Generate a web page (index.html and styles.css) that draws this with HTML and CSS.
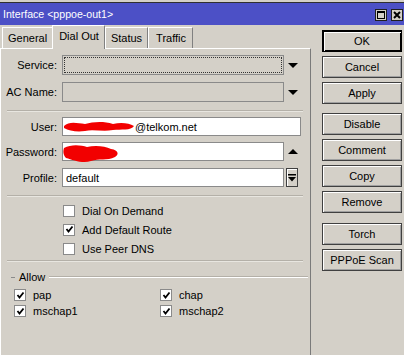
FILE: index.html
```html
<!DOCTYPE html>
<html>
<head>
<meta charset="utf-8">
<link rel="stylesheet" href="styles.css">
</head>
<body>
<div class="strip"></div>
<div class="titlebar">
  <span class="title">Interface &lt;pppoe-out1&gt;</span>
  <div class="winbtns">
    <span class="wbtn"><span class="maxbox"></span></span>
    <span class="wbtn close">
      <svg width="10" height="10" viewBox="0 0 10 10"><path d="M2 2 L8 8 M8 2 L2 8" stroke="#000" stroke-width="2"/></svg>
    </span>
  </div>
</div>
<div class="main">
  <div class="left">
    <div class="tabs">
      <div class="tab">General</div>
      <div class="tab active">Dial Out</div>
      <div class="tab">Status</div>
      <div class="tab">Traffic</div>
    </div>
    <div class="panel">
      <div class="row row-tall">
        <span class="lbl">Service:</span>
        <div class="field disabled"><span class="focusring"></span></div>
        <span class="tri-down"></span>
      </div>
      <div class="row row-tall gap7">
        <span class="lbl">AC Name:</span>
        <div class="field disabled"></div>
        <span class="tri-down"></span>
      </div>
      <div class="sep sep-a"></div>
      <div class="row">
        <span class="lbl">User:</span>
        <div class="field wide">
          <svg class="redact" width="72" height="14" viewBox="0 0 72 14"><path d="M1 6 C6 1 14 3 22 4 C30 2 40 1 50 4 C58 2 66 3 71 6 C68 11 58 9 50 10 C40 12 30 9 22 11 C14 12 6 11 1 8 Z" fill="#f20000"/></svg><span class="val">@telkom.net</span>
        </div>
      </div>
      <div class="row gap6">
        <span class="lbl">Password:</span>
        <div class="field">
          <svg class="redact pw" width="56" height="20" viewBox="0 0 56 20"><path d="M1 4 C8 0 18 1 24 3 C32 1 42 2 48 5 C56 6 56 11 52 13 C44 17 36 14 28 17 C20 20 10 16 3 14 C0 11 0 7 1 4 Z" fill="#f20000"/></svg>
        </div>
        <span class="tri-up"></span>
      </div>
      <div class="row gap7">
        <span class="lbl">Profile:</span>
        <div class="field"><span class="val">default</span></div>
        <span class="ddbtn">
          <svg width="8" height="8" viewBox="0 0 8 8"><rect x="0" y="0" width="8" height="1.5" fill="#000"/><path d="M0 3 L8 3 L4 7.5 Z" fill="#000"/></svg>
        </span>
      </div>
      <div class="sep sep-b"></div>
      <div class="checks">
        <div class="chk"><span class="box"></span><span>Dial On Demand</span></div>
        <div class="chk"><span class="box"><svg width="9" height="9" viewBox="0 0 9 9"><path d="M1.5 4 L3.5 6.5 L7.5 1.5" stroke="#000" stroke-width="1.8" fill="none"/></svg></span><span>Add Default Route</span></div>
        <div class="chk"><span class="box"></span><span>Use Peer DNS</span></div>
      </div>
      <div class="sep sep-c"></div>
      <div class="legend"><span class="dash"></span><span class="legtext">Allow</span><span class="legline"></span></div>
      <div class="allow">
        <div class="chk"><span class="box"><svg width="9" height="9" viewBox="0 0 9 9"><path d="M1.5 4 L3.5 6.5 L7.5 1.5" stroke="#000" stroke-width="1.8" fill="none"/></svg></span><span>pap</span></div>
        <div class="chk"><span class="box"><svg width="9" height="9" viewBox="0 0 9 9"><path d="M1.5 4 L3.5 6.5 L7.5 1.5" stroke="#000" stroke-width="1.8" fill="none"/></svg></span><span>chap</span></div>
        <div class="chk"><span class="box"><svg width="9" height="9" viewBox="0 0 9 9"><path d="M1.5 4 L3.5 6.5 L7.5 1.5" stroke="#000" stroke-width="1.8" fill="none"/></svg></span><span>mschap1</span></div>
        <div class="chk"><span class="box"><svg width="9" height="9" viewBox="0 0 9 9"><path d="M1.5 4 L3.5 6.5 L7.5 1.5" stroke="#000" stroke-width="1.8" fill="none"/></svg></span><span>mschap2</span></div>
      </div>
    </div>
  </div>
  <div class="buttons">
    <div class="btn default">OK</div>
    <div class="btn">Cancel</div>
    <div class="btn">Apply</div>
    <div class="btn group">Disable</div>
    <div class="btn">Comment</div>
    <div class="btn">Copy</div>
    <div class="btn">Remove</div>
    <div class="btn group2">Torch</div>
    <div class="btn">PPPoE Scan</div>
  </div>
</div>
</body>
</html>
```
FILE: styles.css
```css
* { box-sizing: border-box; }
html, body {
  margin: 0;
  padding: 0;
  background: #d4d0c8;
  font-family: "Liberation Sans", Arial, sans-serif;
  font-size: 11px;
  color: #000;
  width: 404px;
  height: 355px;
  overflow: hidden;
}
.strip {
  height: 3px;
  background: #d4d0c8;
  border-bottom: 1px solid #303030;
}
.titlebar {
  height: 22px;
  background: #4c50c6;
  display: flex;
  align-items: center;
  justify-content: space-between;
  padding: 0 1px 0 3px;
}
.title {
  color: #fff;
  font-size: 10.6px;
}
.winbtns {
  display: flex;
  gap: 4px;
  margin-top: 2px;
}
.wbtn {
  width: 12px;
  height: 12px;
  background: #d4d0c8;
  border: 1px solid #202020;
  display: flex;
  align-items: center;
  justify-content: center;
}
.maxbox {
  width: 8px;
  height: 8px;
  border: 1px solid #000;
  border-top-width: 2px;
}
.main {
  display: flex;
  align-items: flex-start;
}
.left {
  width: 311px;
}
.tabs {
  display: flex;
  align-items: flex-end;
  height: 23px;
  padding-left: 2px;
  position: relative;
  z-index: 1;
}
.tab {
  height: 21px;
  padding: 0 5px;
  line-height: 20px;
  border-top: 1px solid #fff;
  border-left: 1px solid #fff;
  border-right: 1px solid #808080;
  background: #d4d0c8;
  font-size: 11px;
}
.tab:last-child { padding: 0 6px 0 7px; }
.tab.active {
  height: 24px;
  margin-bottom: -1px;
  padding: 0 5px 0 6px;
  line-height: 21px;
  margin-left: -1px;
}
.panel {
  height: 310px;
  border-top: 1px solid #fff;
  border-left: 1px solid #fff;
  border-right: 1px solid #7a7a7a;
  padding-top: 6px;
}
.row {
  display: flex;
  align-items: center;
  height: 19px;
}
.row-tall { height: 20px; }
.gap7 { margin-top: 7px; }
.gap6 { margin-top: 6px; }
.lbl {
  width: 56px;
  text-align: right;
  margin-right: 5px;
  font-size: 11px;
}
.field {
  width: 222px;
  height: 100%;
  background: #fff;
  border: 1px solid #8a8a8a;
  display: flex;
  align-items: center;
  padding-left: 3px;
  position: relative;
  font-size: 11px;
}
.field.wide { width: 239px; }
.field.disabled {
  background: #d4d0c8;
  border-color: #8a8a8a;
}
.focusring {
  position: absolute;
  left: 1px;
  top: 1px;
  right: 1px;
  bottom: 1px;
  border: 1px dotted #333;
}
.redact { flex: none; margin-left: -3px; }
.redact.pw { margin-top: 4px; }
.tri-down {
  margin-left: 4px;
  width: 0;
  height: 0;
  border-left: 5px solid transparent;
  border-right: 5px solid transparent;
  border-top: 5px solid #000;
}
.tri-up {
  margin-left: 4px;
  width: 0;
  height: 0;
  border-left: 5px solid transparent;
  border-right: 5px solid transparent;
  border-bottom: 5px solid #000;
}
.ddbtn {
  margin-left: 2px;
  width: 12px;
  height: 19px;
  border: 1px solid #404040;
  box-shadow: inset 1px 1px #fff;
  display: flex;
  align-items: center;
  justify-content: center;
}
.sep {
  margin-left: 6px;
  width: 296px;
  height: 2px;
  border-top: 1px solid #b4b0a8;
  border-bottom: 1px solid #e8e6e0;
}
.sep-a { margin-top: 8px; margin-bottom: 5px; }
.sep-b { margin-top: 8px; margin-bottom: 4px; }
.sep-c { margin-top: 2px; }
.checks {
  padding-left: 62px;
}
.chk {
  display: flex;
  align-items: center;
  height: 19px;
  font-size: 11px;
}
.box {
  width: 12px;
  height: 12px;
  background: #fff;
  border: 1px solid #8a8a8a;
  margin-right: 7px;
  display: flex;
  align-items: center;
  justify-content: center;
  flex: none;
}
.legend {
  display: flex;
  align-items: center;
  height: 14px;
  margin-top: 8px;
}
.dash {
  width: 4px;
  height: 1px;
  background: #8a8a8a;
  margin-left: 10px;
  margin-right: 4px;
}
.legtext { font-size: 11px; margin-right: 4px; }
.legline {
  width: 259px;
  height: 2px;
  border-top: 1px solid #b4b0a8;
  border-bottom: 1px solid #fff;
}
.allow {
  display: grid;
  grid-template-columns: 146px 120px;
  padding-left: 13px;
  margin-top: 3px;
}
.allow .chk { height: 16px; }
.buttons {
  margin-left: 11px;
  width: 80px;
  padding-top: 5px;
  display: flex;
  flex-direction: column;
  gap: 4px;
}
.btn {
  height: 22px;
  border: 1px solid #404040;
  box-shadow: inset 1px 1px #fff, inset -1px -1px #a0a0a0;
  text-align: center;
  line-height: 20px;
  font-size: 11px;
}
.btn.default {
  border: 1px solid #000;
  box-shadow: inset 1px 1px #000, inset 2px 2px #fff, inset -1px -1px #000;
}
.btn.group { margin-top: 5px; }
.btn.group2 { margin-top: 6px; }
```
